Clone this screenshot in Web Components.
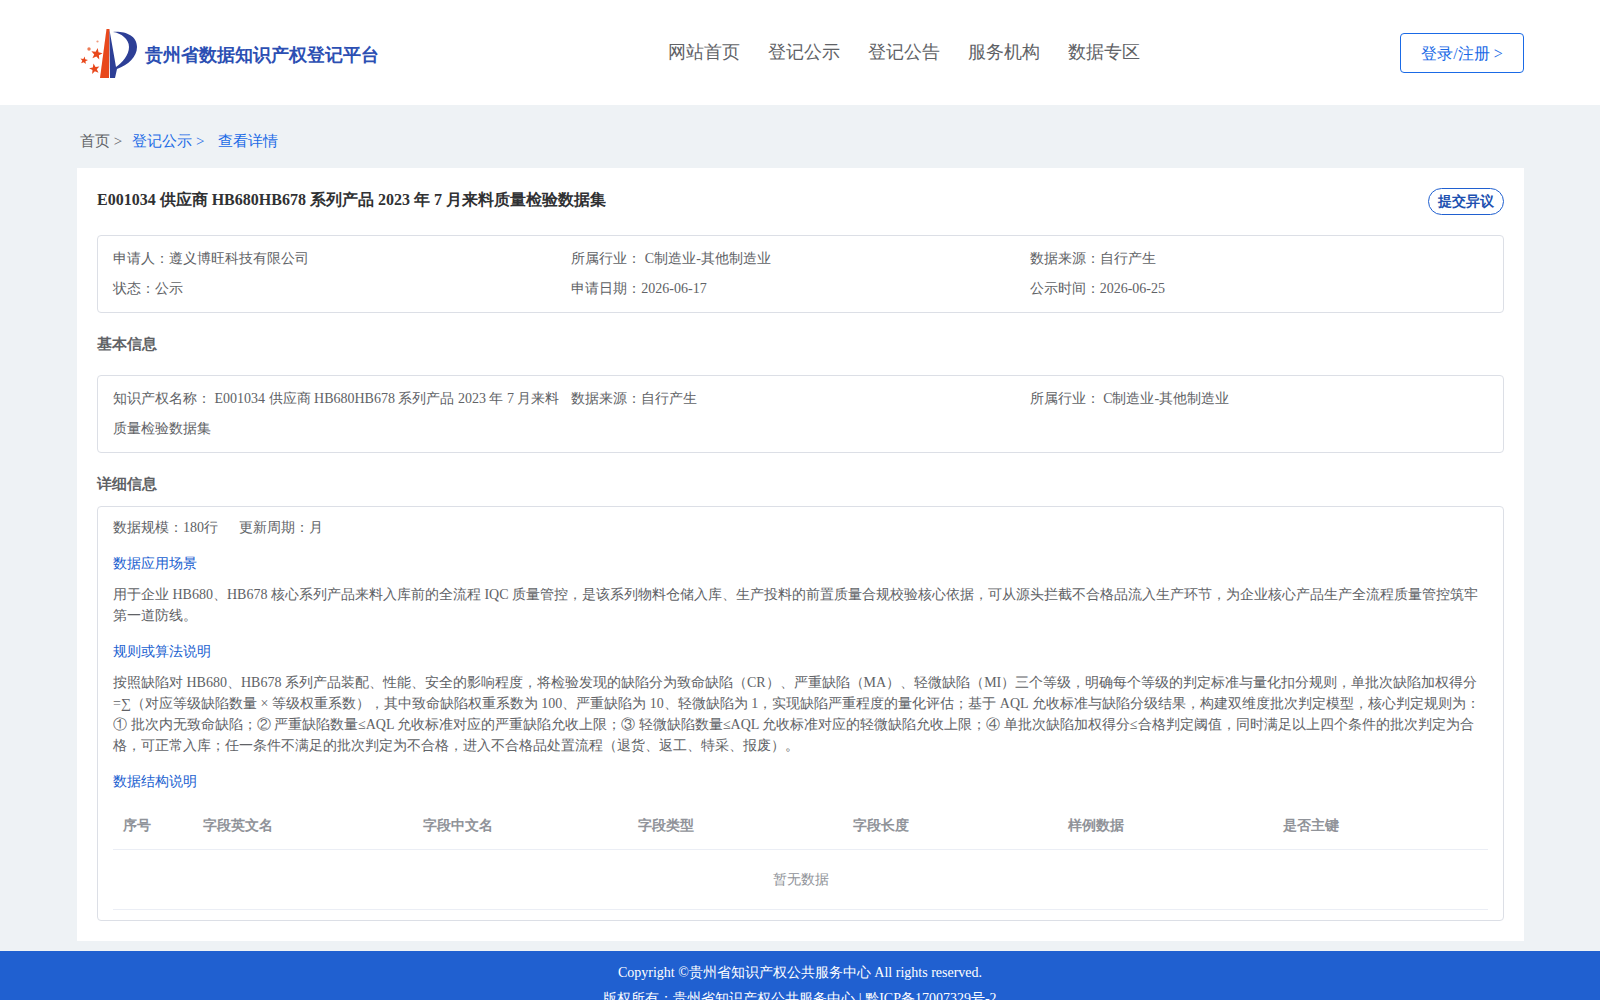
<!DOCTYPE html>
<html><head><meta charset="utf-8"><title>查看详情</title>
<style>
html,body{margin:0;padding:0;height:1000px;overflow:hidden;background:#eef2f5;font-family:"Liberation Serif",serif;font-size:14px;color:#606266}
</style></head><body>
<site-header></site-header>
<bread-crumb></bread-crumb>
<detail-page></detail-page>
<site-footer></site-footer>
<script>
function def(name,html){customElements.define(name,class extends HTMLElement{constructor(){super();this.attachShadow({mode:'open'}).innerHTML=html}})}
function star(cx,cy,r,rot){let p=[];for(let i=0;i<10;i++){const a=(rot+i*36-90)*Math.PI/180,q=i%2?r*.42:r;p.push((cx+q*Math.cos(a)).toFixed(1)+','+(cy+q*Math.sin(a)).toFixed(1))}return `<polygon points="${p.join(' ')}" fill="#e8481c"/>`}
def('site-logo',`<style>:host{display:flex;align-items:center}svg{display:block;flex:none}span{font-weight:bold;font-size:18px;font-family:"Liberation Sans",sans-serif;color:#2c4fb3;margin-left:7px;position:relative;top:2px}</style>
<svg width="58" height="52" viewBox="0 0 58 52">
<path d="M26.5 2 L29.5 2 L29 51 L20 51 Z" fill="#e8481c"/>
<path d="M29.5 3 L30 51 L35 51 L37 42 C48 38 57 30 57 20 C57 8 44 4 33 5 C41 6 49 12 49 20 C49 28 42 36 36 40 Z" fill="#2d3f96"/>
${star(16.7,27,6,10)}${star(14.5,42,5.5,-10)}${star(4,33.5,4,10)}
<circle cx="9" cy="22" r="1.7" fill="#ec7b55"/><circle cx="17.5" cy="14.5" r="1.1" fill="#f09a7c"/>
</svg><span>贵州省数据知识产权登记平台</span>`);
def('site-header',`<style>:host{display:flex;align-items:center;justify-content:space-between;height:105px;background:#fff;padding:0 76px 0 80px;box-sizing:border-box;position:relative}
.nav{display:flex;gap:28px;position:absolute;left:668px;top:40px;font-size:18px;line-height:24px;color:#606266}
.btn{width:124px;height:40px;box-sizing:border-box;border:1px solid #1a6ae6;border-radius:4px;color:#1a6ae6;font-size:16px;display:flex;align-items:center;justify-content:center;padding-top:3px}
</style><site-logo></site-logo><div class="nav"><span>网站首页</span><span>登记公示</span><span>登记公告</span><span>服务机构</span><span>数据专区</span></div><div class="btn">登录/注册 &gt;</div>`);
def('bread-crumb',`<style>:host{display:flex;height:63px;align-items:center;padding-left:80px;font-size:15px;color:#606266;box-sizing:border-box;padding-top:10px}.l{color:#1a6ae6}.a{margin-left:10px}.b{margin-left:14px}</style><span>首页 &gt;</span><span class="l a">登记公示 &gt;</span><span class="l b">查看详情</span>`);
def('info-box',`<style>:host{display:grid;grid-template-columns:repeat(3,1fr);box-sizing:border-box;border:1px solid #dcdfe6;border-radius:4px;padding:8px 15px;line-height:30px;color:#606266}</style><slot></slot>`);
def('section-title',`<style>:host{display:block;font-weight:bold;color:#606266;font-size:15px;line-height:20px}</style><slot></slot>`);
def('sub-title',`<style>:host{display:block;color:#2060d0;font-size:14px;line-height:20px}</style><slot></slot>`);
def('data-table',`<style>:host{display:block;margin-top:10px;color:#909399}
.r{display:grid;grid-template-columns:90px 220px 215px 215px 215px 215px 1fr;height:48px;box-sizing:border-box;align-items:center;font-weight:bold;border-bottom:1px solid #ebeef5}
.r span:first-child{padding-left:10px}.e{height:60px;box-sizing:border-box;display:flex;align-items:center;justify-content:center;border-bottom:1px solid #ebeef5}</style>
<div class="r"><span>序号</span><span>字段英文名</span><span>字段中文名</span><span>字段类型</span><span>字段长度</span><span>样例数据</span><span>是否主键</span></div><div class="e">暂无数据</div>`);
def('detail-page',`<style>:host{display:block;width:1447px;height:773px;margin-left:77px;background:#fff;padding:20px;box-sizing:border-box}
.top{display:flex;justify-content:space-between;align-items:flex-start;height:27px;margin-bottom:20px}
h1{margin:0;font-size:16px;line-height:24px;font-weight:bold;color:#303133}
.ob{box-sizing:border-box;width:76px;height:27px;border:1px solid #2060d0;border-radius:14px;color:#2050b0;font-weight:bold;display:flex;align-items:center;justify-content:center}
info-box.one{height:78px}
section-title{margin:21px 0 21px}
.box{box-sizing:border-box;height:415px;border:1px solid #dcdfe6;border-radius:4px;padding:0 15px;color:#606266}
.sc{line-height:22px;margin-top:10px}.sc span+span{margin-left:21px}
sub-title{margin-top:16px}
sub-title.f{margin-top:15px}
p{margin:10px 0 0;line-height:21px;color:#606266}
</style>
<div class="top"><h1>E001034 供应商 HB680HB678 系列产品 2023 年 7 月来料质量检验数据集</h1><div class="ob">提交异议</div></div>
<info-box class="one"><div>申请人：遵义博旺科技有限公司</div><div>所属行业： C制造业-其他制造业</div><div>数据来源：自行产生</div><div>状态：公示</div><div>申请日期：2026-06-17</div><div>公示时间：2026-06-25</div></info-box>
<section-title>基本信息</section-title>
<info-box class="one"><div>知识产权名称： E001034 供应商 HB680HB678 系列产品 2023 年 7 月来料质量检验数据集</div><div>数据来源：自行产生</div><div>所属行业： C制造业-其他制造业</div></info-box>
<section-title style="margin:21px 0 12px">详细信息</section-title>
<div class="box">
<div class="sc"><span>数据规模：180行</span><span>更新周期：月</span></div>
<sub-title class="f">数据应用场景</sub-title>
<p>用于企业 HB680、HB678 核心系列产品来料入库前的全流程 IQC 质量管控，是该系列物料仓储入库、生产投料的前置质量合规校验核心依据，可从源头拦截不合格品流入生产环节，为企业核心产品生产全流程质量管控筑牢第一道防线。</p>
<sub-title>规则或算法说明</sub-title>
<p>按照缺陷对 HB680、HB678 系列产品装配、性能、安全的影响程度，将检验发现的缺陷分为致命缺陷（CR）、严重缺陷（MA）、轻微缺陷（MI）三个等级，明确每个等级的判定标准与量化扣分规则，单批次缺陷加权得分 =∑（对应等级缺陷数量 × 等级权重系数），其中致命缺陷权重系数为 100、严重缺陷为 10、轻微缺陷为 1，实现缺陷严重程度的量化评估；基于 AQL 允收标准与缺陷分级结果，构建双维度批次判定模型，核心判定规则为：① 批次内无致命缺陷；② 严重缺陷数量≤AQL 允收标准对应的严重缺陷允收上限；③ 轻微缺陷数量≤AQL 允收标准对应的轻微缺陷允收上限；④ 单批次缺陷加权得分≤合格判定阈值，同时满足以上四个条件的批次判定为合格，可正常入库；任一条件不满足的批次判定为不合格，进入不合格品处置流程（退货、返工、特采、报废）。</p>
<sub-title>数据结构说明</sub-title>
<data-table></data-table>
</div>`);
def('site-footer',`<style>:host{display:block;margin-top:10px;background:#2060d0;color:#fff;text-align:center;font-size:14px;line-height:26px;padding-top:9px;height:60px}</style><div>Copyright ©贵州省知识产权公共服务中心 All rights reserved.</div><div>版权所有：贵州省知识产权公共服务中心 | 黔ICP备17007329号-2</div>`);
</script>
</body></html>
